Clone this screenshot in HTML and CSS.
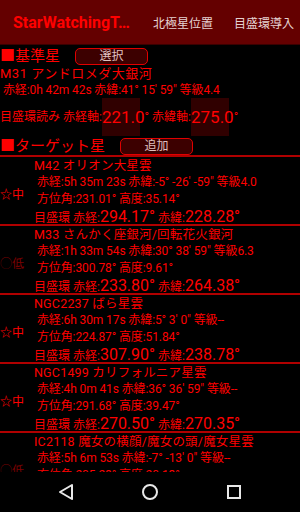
FILE: index.html
```html
<!DOCTYPE html>
<html lang="ja">
<head>
  <meta charset="utf-8">
  <title>StarWatchingT</title>
  <link rel="stylesheet" href="styles.css">
</head>
<body>
  <div class="screen">
    <div class="topbar">
      <div class="title">StarWatchingT…</div>
      <div class="menu">北極星位置</div>
      <div class="menu">目盛環導入</div>
    </div>

    <div class="main">
      <div class="section">
        <span class="heading">■基準星</span>
        <button class="btn">選択</button>
      </div>
      <div class="line name">M31 アンドロメダ大銀河</div>
      <div class="line">&nbsp;赤経:0h 42m 42s 赤緯:41° 15' 59" 等級4.4</div>
      <div class="read">
        <span>目盛環読み 赤経軸:</span><span class="box">221.0</span><span>° 赤緯軸:</span><span class="box">275.0</span><span>°</span>
      </div>

      <div class="section target">
        <span class="heading">■ターゲット星</span>
        <button class="btn">追加</button>
      </div>

      <div class="list">
        <div class="item">
          <div class="level">☆中</div>
          <div class="info">
            <div class="name">M42 オリオン大星雲</div>
            <div>&nbsp;赤経:5h 35m 23s 赤緯:-5° -26' -59" 等級4.0</div>
            <div>&nbsp;方位角:231.01° 高度:35.14°</div>
            <div class="ring">目盛環 赤経:<span class="big">294.17°</span> 赤緯:<span class="big">228.28°</span></div>
          </div>
        </div>
        <div class="item">
          <div class="level dim">◯低</div>
          <div class="info">
            <div class="name">M33 さんかく座銀河/回転花火銀河</div>
            <div>&nbsp;赤経:1h 33m 54s 赤緯:30° 38' 59" 等級6.3</div>
            <div>&nbsp;方位角:300.78° 高度:9.61°</div>
            <div class="ring">目盛環 赤経:<span class="big">233.80°</span> 赤緯:<span class="big">264.38°</span></div>
          </div>
        </div>
        <div class="item">
          <div class="level">☆中</div>
          <div class="info">
            <div class="name">NGC2237 ばら星雲</div>
            <div>&nbsp;赤経:6h 30m 17s 赤緯:5° 3' 0" 等級--</div>
            <div>&nbsp;方位角:224.87° 高度:51.84°</div>
            <div class="ring">目盛環 赤経:<span class="big">307.90°</span> 赤緯:<span class="big">238.78°</span></div>
          </div>
        </div>
        <div class="item">
          <div class="level">☆中</div>
          <div class="info">
            <div class="name">NGC1499 カリフォルニア星雲</div>
            <div>&nbsp;赤経:4h 0m 41s 赤緯:36° 36' 59" 等級--</div>
            <div>&nbsp;方位角:291.68° 高度:39.47°</div>
            <div class="ring">目盛環 赤経:<span class="big">270.50°</span> 赤緯:<span class="big">270.35°</span></div>
          </div>
        </div>
        <div class="item">
          <div class="level dim">◯低</div>
          <div class="info">
            <div class="name">IC2118 魔女の横顔/魔女の頭/魔女星雲</div>
            <div>&nbsp;赤経:5h 6m 53s 赤緯:-7° -13' 0" 等級--</div>
            <div>&nbsp;方位角:205.28° 高度:20.13°</div>
            <div class="ring">目盛環 赤経:<span class="big">250.10°</span> 赤緯:<span class="big">255.12°</span></div>
          </div>
        </div>
      </div>
    </div>

    <div class="navbar">
      <svg width="16" height="18" viewBox="0 0 16 18"><path d="M14 2 L2 9 L14 16 Z" fill="none" stroke="#e8e8e8" stroke-width="2" stroke-linejoin="round"/></svg>
      <svg width="18" height="18" viewBox="0 0 18 18"><circle cx="9" cy="9" r="7" fill="none" stroke="#e8e8e8" stroke-width="2"/></svg>
      <svg width="16" height="16" viewBox="0 0 16 16"><rect x="2" y="2" width="12" height="12" fill="none" stroke="#e8e8e8" stroke-width="2"/></svg>
    </div>
  </div>
</body>
</html>
```

FILE: styles.css
```css
body {
  margin: 0;
  background-color: #000;
  font-family: Roboto, "Noto Sans CJK JP", sans-serif;
  color: #f00;
}
.screen {
  width: 300px;
  height: 512px;
  display: flex;
  flex-direction: column;
  overflow: hidden;
}
.topbar {
  height: 44px;
  flex-shrink: 0;
  background-color: #640000;
  display: flex;
  align-items: center;
  border-bottom: 1px solid #3a0000;
  white-space: nowrap;
}
.title {
  color: #ff0000;
  font-weight: bold;
  font-size: 16px;
  padding-left: 13px;
  width: 140px;
  flex-shrink: 0;
}
.menu {
  color: #e6d2d2;
  font-size: 12px;
  margin-right: 21px;
}
.main {
  flex: 1;
  overflow: hidden;
}
.section {
  display: flex;
  align-items: center;
  height: 20px;
  margin-top: 1px;
}
.heading {
  font-size: 15px;
  line-height: 20px;
  width: 75px;
}
.target .heading {
  width: 120px;
}
.btn {
  width: 73px;
  height: 17px;
  padding: 0;
  background-color: #3c0000;
  border: 1px solid #e00000;
  border-radius: 5px;
  color: #e0c0c0;
  font-family: Roboto, "Noto Sans CJK JP", sans-serif;
  font-size: 12px;
  line-height: 15px;
}
.line {
  font-size: 12px;
  line-height: 16px;
  white-space: nowrap;
  letter-spacing: -0.1px;
}
.line.name {
  font-size: 13px;
  letter-spacing: 0.5px;
}
.read {
  display: flex;
  align-items: center;
  font-size: 12px;
  height: 38px;
  white-space: nowrap;
}
.read span {
  line-height: 38px;
}
.read .box {
  font-size: 17px;
  background: linear-gradient(#300000, #300000) no-repeat left top / 38px 100%;
}
.target {
  margin-top: 1px;
  height: 18px;
  border-bottom: 2px solid #b00000;
}
.item {
  display: flex;
  height: 67px;
  border-bottom: 2px solid #b00000;
}
.level {
  width: 34px;
  flex-shrink: 0;
  font-size: 12px;
  align-self: center;
  margin-top: 6px;
}
.level.dim {
  color: #7a0000;
}
.info {
  font-size: 12px;
  line-height: 16.5px;
  white-space: nowrap;
  letter-spacing: -0.1px;
}
.info .name {
  font-size: 12.5px;
  line-height: 17px;
  letter-spacing: 0.2px;
}
.ring {
  line-height: 19px;
  letter-spacing: 0;
}
.big {
  font-size: 16px;
}
.navbar {
  height: 40px;
  flex-shrink: 0;
  background-color: #000;
  display: flex;
  justify-content: space-between;
  align-items: center;
  padding: 0 58px;
}
```
